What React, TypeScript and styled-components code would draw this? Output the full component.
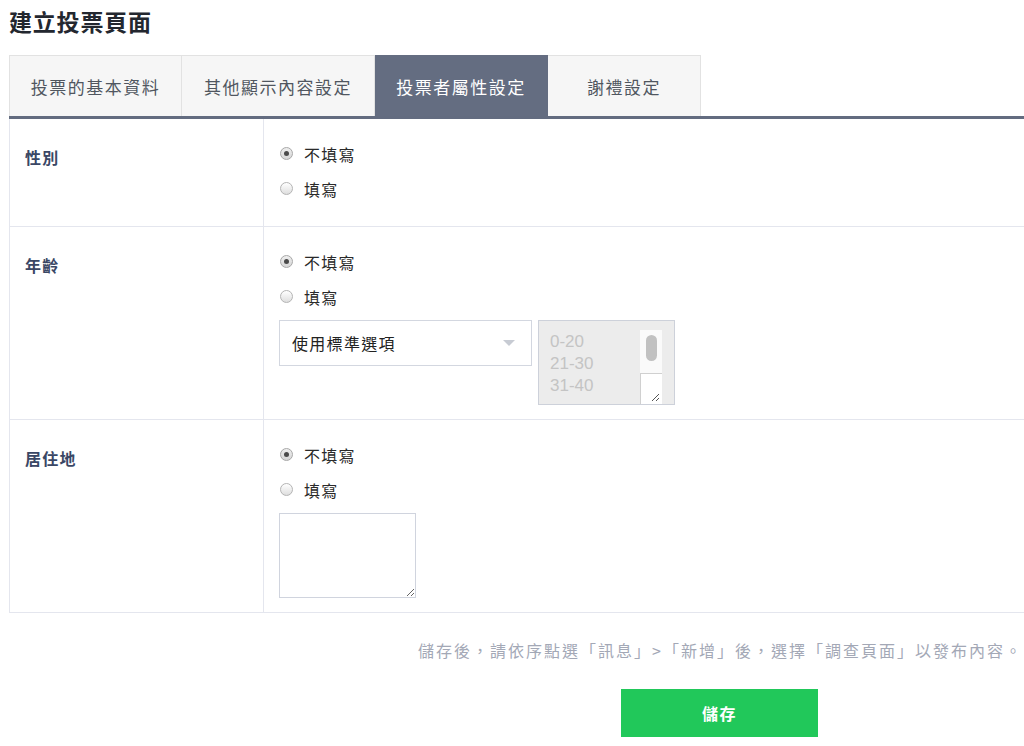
import React from "react";
import styled, { createGlobalStyle } from "styled-components";

const GlobalStyle = createGlobalStyle`
  html, body { margin: 0; padding: 0; background: #fff; overflow: hidden; }
  body { font-family: "Noto Sans CJK TC", "Noto Sans", sans-serif; color: #333; }
  * { box-sizing: border-box; }
`;

const Page = styled.div`
  width: 1060px;
  padding: 6px 0 0 9px;
`;

const Title = styled.h1`
  margin: 0 0 18px;
  font-size: 23px;
  line-height: 31px;
  font-weight: 700;
  color: #23272f;
  letter-spacing: 0.8px;
`;

const TabBar = styled.div`
  display: flex;
  border-bottom: 3px solid #636c80;
`;

const Tab = styled.div<{ $w: number; $active?: boolean }>`
  width: ${(p) => p.$w}px;
  height: 61px;
  display: flex;
  align-items: center;
  justify-content: center;
  font-size: 17px;
  letter-spacing: 1.5px;
  background: ${(p) => (p.$active ? "#646d81" : "#f6f6f6")};
  color: ${(p) => (p.$active ? "#ffffff" : "#50565f")};
  border: 1px solid ${(p) => (p.$active ? "#646d81" : "#e2e2e2")};
  border-bottom: none;
  & + & { border-left: ${(p) => (p.$active ? "1px solid #646d81" : "none")}; }
`;

const Table = styled.div`
  border-left: 1px solid #e4e6ee;
  border-right: 1px solid #e4e6ee;
`;

const Row = styled.div`
  display: grid;
  grid-template-columns: 254px 1fr;
  border-bottom: 1px solid #e4e6ee;
`;

const Label = styled.div`
  padding: 25px 15px 0;
  font-size: 16px;
  line-height: 26px;
  font-weight: 700;
  color: #3a4765;
  letter-spacing: 1.2px;
  border-right: 1px solid #e4e6ee;
`;

const Cell = styled.div`
  padding: 17px 15px 14px;
`;

const RadioGroup = styled.div`
  display: flex;
  flex-direction: column;
  margin-bottom: 6px;
`;

const RadioRow = styled.label`
  display: flex;
  align-items: center;
  height: 35px;
  gap: 11px;
  font-size: 16px;
  letter-spacing: 1.3px;
  color: #2a2a2a;
`;

const Radio = styled.input`
  appearance: none;
  margin: 0 0 0 1px;
  width: 13px;
  height: 13px;
  border-radius: 50%;
  border: 1px solid #b4b4b4;
  background: linear-gradient(#ffffff, #dedede);
  position: relative;
  &:checked {
    background: linear-gradient(#eeeeee, #d6d6d6);
    border-color: #a8a8a8;
  }
  &:checked::after {
    content: "";
    position: absolute;
    left: 3px;
    top: 3px;
    width: 5px;
    height: 5px;
    border-radius: 50%;
    background: #4a4a4a;
  }
`;

const Controls = styled.div`
  display: flex;
  align-items: flex-start;
  gap: 6px;
  margin-top: 1px;
`;

const SelectBox = styled.div`
  width: 253px;
  height: 46px;
  border: 1px solid #d3d7e0;
  display: flex;
  align-items: center;
  justify-content: space-between;
  padding: 0 16px 0 12px;
  font-size: 16px;
  letter-spacing: 1.3px;
  color: #222;
`;

const Arrow = styled.span`
  width: 0;
  height: 0;
  border-left: 6px solid transparent;
  border-right: 6px solid transparent;
  border-top: 6px solid #c7cbd3;
`;

const ListBox = styled.div`
  width: 137px;
  height: 85px;
  border: 1px solid #cdd1da;
  background: #ececec;
  display: flex;
  overflow: hidden;
`;

const Items = styled.div`
  flex: 1;
  padding: 10px 0 0 11px;
  font-family: "Liberation Sans", Arial, sans-serif;
  font-size: 17px;
  line-height: 22px;
  color: #c4c4c4;
`;

const ScrollCol = styled.div`
  width: 22px;
  margin: 9px 12px 0 0;
  display: flex;
  flex-direction: column;
`;

const Track = styled.div`
  flex: 1;
  background: #fafafa;
  display: flex;
  justify-content: center;
  padding-top: 5px;
`;

const Thumb = styled.div`
  width: 11px;
  height: 26px;
  border-radius: 6px;
  background: #c1c1c1;
`;

const Corner = styled.div`
  height: 31px;
  background: #fff;
  border-top: 1px solid #d0d0d0;
  border-left: 1px solid #d0d0d0;
  display: flex;
  align-items: flex-end;
  justify-content: flex-end;
  padding: 0 2px 2px 0;
`;

const TextArea = styled.textarea`
  display: block;
  width: 137px;
  height: 85px;
  border: 1px solid #d0d4de;
  border-radius: 0;
  outline: none;
  font-family: inherit;
`;

const Note = styled.p`
  margin: 25px 0 0;
  padding-right: 37px;
  text-align: right;
  font-size: 16px;
  line-height: 24px;
  letter-spacing: 2px;
  color: #a3a8b6;
`;

const ButtonRow = styled.div`
  display: flex;
  padding-left: 612px;
  margin-top: 27px;
`;

const SaveButton = styled.button`
  width: 197px;
  height: 48px;
  border: none;
  background: #21c85a;
  color: #fff;
  font-family: inherit;
  font-size: 16px;
  font-weight: 700;
  letter-spacing: 1.5px;
  cursor: pointer;
`;

const Grip = () => (
  <svg width="11" height="11" viewBox="0 0 11 11">
    <path d="M10 3 L3 10 M10 7 L7 10" stroke="#555" strokeWidth="1" fill="none" />
  </svg>
);

const RadioPair = ({ name }: { name: string }) => (
  <RadioGroup>
    <RadioRow>
      <Radio type="radio" name={name} defaultChecked />
      不填寫
    </RadioRow>
    <RadioRow>
      <Radio type="radio" name={name} />
      填寫
    </RadioRow>
  </RadioGroup>
);

export default function App() {
  return (
    <>
      <GlobalStyle />
      <Page>
        <Title>建立投票頁面</Title>
        <TabBar>
          <Tab $w={173}>投票的基本資料</Tab>
          <Tab $w={193}>其他顯示內容設定</Tab>
          <Tab $w={173} $active>投票者屬性設定</Tab>
          <Tab $w={153}>謝禮設定</Tab>
        </TabBar>
        <Table>
          <Row>
            <Label>性別</Label>
            <Cell>
              <RadioPair name="gender" />
            </Cell>
          </Row>
          <Row>
            <Label>年齡</Label>
            <Cell>
              <RadioPair name="age" />
              <Controls>
                <SelectBox>
                  使用標準選項
                  <Arrow />
                </SelectBox>
                <ListBox>
                  <Items>
                    <div>0-20</div>
                    <div>21-30</div>
                    <div>31-40</div>
                  </Items>
                  <ScrollCol>
                    <Track>
                      <Thumb />
                    </Track>
                    <Corner>
                      <Grip />
                    </Corner>
                  </ScrollCol>
                </ListBox>
              </Controls>
            </Cell>
          </Row>
          <Row>
            <Label>居住地</Label>
            <Cell>
              <RadioPair name="area" />
              <Controls>
                <TextArea />
              </Controls>
            </Cell>
          </Row>
        </Table>
        <Note>儲存後，請依序點選「訊息」&gt;「新增」後，選擇「調查頁面」以發布內容。</Note>
        <ButtonRow>
          <SaveButton>儲存</SaveButton>
        </ButtonRow>
      </Page>
    </>
  );
}
